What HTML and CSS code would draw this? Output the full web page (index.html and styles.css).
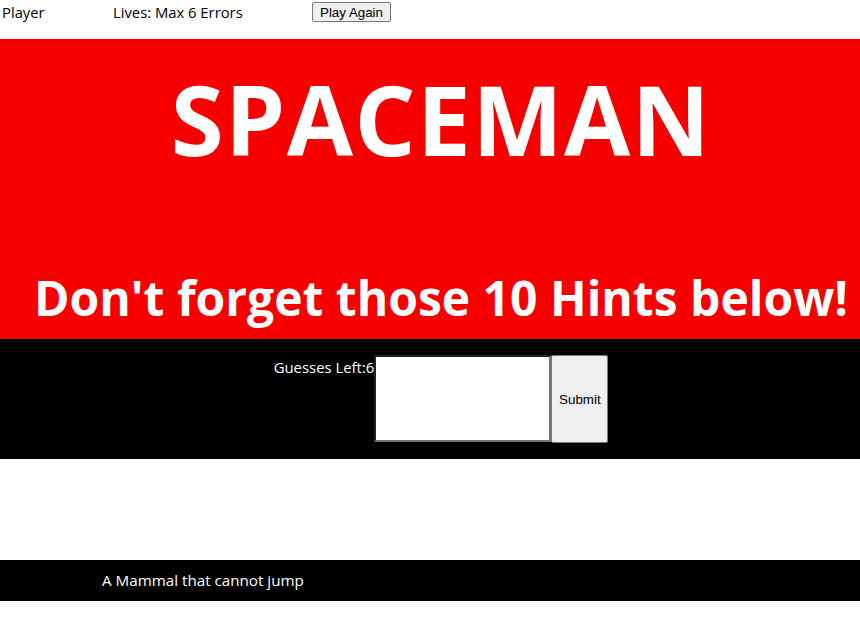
FILE: index.html
```html
<!DOCTYPE html>
<html lang="en">
<head>
<meta charset="utf-8">
<title>Spaceman</title>
<link rel="stylesheet" href="styles.css">
</head>
<body>
<div class="topbar">
  <span class="player">Player</span>
  <span class="lives">Lives: Max 6 Errors</span>
  <button class="btn play">Play Again</button>
</div>
<header class="hero">
  <h1 class="title">SPACEMAN</h1>
  <h2 class="subtitle">Don't forget those 10 Hints below!</h2>
</header>
<section class="game">
  <span class="guesses">Guesses Left:6</span>
  <input class="guess-input" type="text">
  <button class="btn submit">Submit</button>
</section>
<section class="spacer"></section>
<div class="hint">A Mammal that cannot jump</div>
</body>
</html>
```
FILE: styles.css
```css
html, body {
  margin: 0;
  padding: 0;
  background: #fdfdfd;
}
body {
  font-family: "Open Sans", "Noto Sans", sans-serif;
  color: #000;
}
.topbar {
  height: 39px;
  display: flex;
  align-items: flex-start;
  background: #fff;
  font-size: 14.8px;
}
.player {
  margin-left: 2px;
  width: 111px;
  line-height: 24px;
}
.lives {
  width: 199px;
  line-height: 24px;
}
.btn {
  font-family: "Liberation Sans", Arial, sans-serif;
  font-size: 13.33px;
  color: #000;
  background: #efefef;
  border: 1px solid #767676;
  border-radius: 2px;
}
.play {
  margin-top: 2px;
  height: 20px;
  width: 79px;
  padding: 0 6px;
}
.hero {
  background: #f70000;
  color: #fff;
  height: 300px;
  padding-left: 22px;
  text-align: center;
  display: flex;
  flex-direction: column;
  align-items: center;
}
.title {
  margin: 0;
  margin-top: 15px;
  font-size: 96px;
  letter-spacing: 1.4px;
  line-height: 130px;
  font-weight: 700;
}
.subtitle {
  margin: 0;
  margin-top: 84px;
  font-size: 48px;
  line-height: 60px;
  font-weight: 700;
  white-space: nowrap;
}
.game {
  background: #000;
  height: 120px;
  box-sizing: border-box;
  padding: 16px 0 0 22px;
  display: flex;
  justify-content: center;
  align-items: flex-start;
}
.guesses {
  color: #fff;
  font-size: 14.9px;
  line-height: 24px;
}
.guess-input {
  box-sizing: border-box;
  width: 177px;
  height: 87px;
  margin: 0;
  border: 2px solid #767676;
  border-style: inset;
  background: #fff;
}
.submit {
  width: 57px;
  height: 88px;
  padding: 0;
}
.spacer {
  height: 101px;
  background: #fdfdfd;
}
.hint {
  background: #000;
  color: #fff;
  height: 41px;
  line-height: 41px;
  padding-left: 102px;
  font-size: 15.2px;
}
```
